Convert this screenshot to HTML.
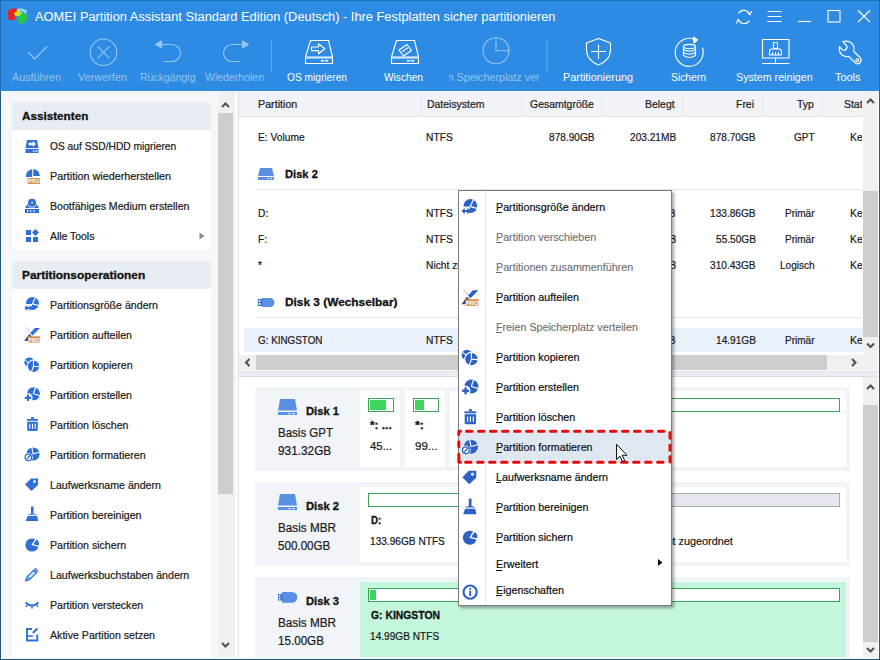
<!DOCTYPE html>
<html><head><meta charset="utf-8"><style>
html,body{margin:0;padding:0;width:880px;height:660px;overflow:hidden;background:#fff}
body{position:relative;font-family:"Liberation Sans", sans-serif}
</style></head><body>
<div style="position:absolute;left:0px;top:0px;width:880px;height:91px;background:#2d8be3;"></div>
<div style="position:absolute;left:0px;top:0px;width:880px;height:1px;background:#1e6fc0;"></div>
<svg style="position:absolute;left:0;top:0" width="32" height="30" viewBox="0 0 32 30">
<path d="M15 10.5 Q21 6 27.5 11 L26 14 Q21 9.5 17 12.5 Z" fill="#86d8f6"/>
<path d="M8 11 Q11 7.5 16.5 8.3 L17.5 13 L14.5 16 L15.5 20 H8.3 Z" fill="#e8231f"/>
<path d="M14 12.8 L18.5 10.5 L22.5 13 L19.5 16.5 L15 15.8 Z" fill="#c4e32c"/>
<path d="M17.2 17 L22.5 13.5 L27.5 15 L27.2 20 L21.5 24 L17.5 22.5 Z" fill="#27c744"/>
</svg>
<svg style="position:absolute;left:730px;top:4px" width="148" height="26" viewBox="730 4 148 26" fill="none" stroke="#fff" stroke-width="1.1">
<path d="M738.5 13.5 A6 6 0 0 1 749.5 14.5" /><path d="M749.5 20.5 A6 6 0 0 1 738.5 19.5"/>
<path d="M747 11.5 L750 14.8 L751.5 11" /><path d="M741 23 L738 19.5 L736.5 23.5"/>
<path d="M767.5 11.5 H781.5 M767.5 16.5 H781.5 M767.5 21.5 H781.5"/>
<path d="M798 21.5 H811"/>
<rect x="828" y="10.5" width="12" height="11.5"/>
<path d="M858 10.5 L870 22 M870 10.5 L858 22"/>
</svg>
<svg style="position:absolute;left:0;top:30px" width="880" height="42" viewBox="0 30 880 42" fill="none" stroke-width="1.15" stroke-linecap="round" stroke-linejoin="round">
<g stroke="#96c4f0">
<path d="M28.5 52.5 L34.5 59 L47 46.5"/>
<circle cx="103.5" cy="52.3" r="13.3"/>
<path d="M98 46.8 L109 57.8 M109 46.8 L98 57.8"/>
<path d="M160 44.5 H172 A8.5 8.5 0 0 1 172 61.5 H164"/><path d="M161.5 41 L155.5 44.5 L161.5 48 Z" fill="#96c4f0"/>
<path d="M244 44.5 H232 A8.5 8.5 0 0 0 232 61.5 H240"/><path d="M242.5 41 L248.5 44.5 L242.5 48 Z" fill="#96c4f0"/>
<circle cx="496" cy="50.7" r="13"/>
<path d="M496 38 V50.7 H509"/>
</g>
<path d="M271.5 40 V79" stroke="#6aa9ea" stroke-width="1"/>
<path d="M547 40 V80" stroke="#6aa9ea" stroke-width="1"/>
<g stroke="#fff">
<path d="M305.5 57 L310.5 40.5 H328.5 L332.5 57 Z"/><rect x="305.5" y="58" width="27" height="5.5"/>
<path d="M321.5 60.8 H323.5 M325.5 60.8 H327.5" stroke-width="1.5"/>
<path d="M311.5 47 H318.5 V43.8 L324.8 48.8 L318.5 53.8 V50.6 H311.5 Z"/>
<path d="M391.5 57 L396.5 40.5 H414.5 L418.5 57 Z"/><rect x="391.5" y="58" width="27" height="5.5"/>
<path d="M407.5 60.8 H409.5 M411.5 60.8 H413.5" stroke-width="1.5"/>
<path d="M399 50 L407 44.5 L411.5 50.5 L403.5 56 Z"/><path d="M402.5 51.5 L407.5 48"/>
<path d="M598.5 38.5 L610.5 43 V50 Q610.5 60 598.5 65 Q586.5 60 586.5 50 V43 Z"/>
<path d="M598.5 45 V58.5 M591.5 51.5 H605.5"/>
<path d="M702.5 48 A14 14 0 1 1 694 39.2"/><path d="M693.5 37 L697.5 39.8 L694 43.2 Z" fill="#fff"/>
<ellipse cx="689.5" cy="46.5" rx="6" ry="2.2"/><path d="M683.5 46.5 V55.5 Q689.5 59.5 695.5 55.5 V46.5 M683.5 49.5 Q689.5 53 695.5 49.5 M683.5 52.5 Q689.5 56 695.5 52.5"/>
<rect x="762.5" y="39.5" width="26.5" height="18.5"/><path d="M775.5 58 V63.5 M762.5 63.5 H789"/>
<path d="M773.5 42.5 H777.5 V48.5 H773.5 Z M769.5 55 V51.5 Q769.5 49 772 49 H779 Q781.5 49 781.5 51.5 V55 Z M772.5 55 V52.5 M775.5 55 V52.5 M778.5 55 V52.5"/>
<path d="M842.9 41.8 L847 46 Q847.5 48.8 845 50.2 Q842 50.8 839.5 46.5 Q838.3 52 842.5 55.3 Q845.8 57.3 849 56.6 L855.5 63 Q858.3 65 860.5 62.2 Q862 59.5 860 57.5 L853.8 51.5 Q855 45.2 850.3 42.3 Q846.5 40.3 842.9 41.8 Z"/><circle cx="857.3" cy="60.2" r="1.4"/>
</g>
</svg>
<span style="position:absolute;left:35.30px;top:11.14px;font-size:12px;line-height:12px;font-weight:400;color:#fff;transform:scaleX(1.0690);transform-origin:0 0;white-space:pre;">AOMEI Partition Assistant Standard Edition (Deutsch) - Ihre Festplatten sicher partitionieren</span>
<div style="position:absolute;left:1px;top:91px;width:217px;height:568px;background:#f5f7fa;"></div>
<div style="position:absolute;left:12px;top:102px;width:199px;height:28px;background:#e8edf4;"></div>
<div style="position:absolute;left:12px;top:130px;width:199px;height:120px;background:#ffffff;"></div>
<div style="position:absolute;left:12px;top:261px;width:199px;height:28px;background:#e8edf4;"></div>
<div style="position:absolute;left:12px;top:289px;width:199px;height:369px;background:#ffffff;"></div>
<div style="position:absolute;left:218px;top:91px;width:17px;height:568px;background:#f0f0f0;"></div>
<div style="position:absolute;left:218px;top:113px;width:15px;height:381px;background:#cdcdcd;"></div>
<div style="position:absolute;left:235px;top:91px;width:3px;height:568px;background:#fbfbfb;"></div>
<div style="position:absolute;left:238px;top:91px;width:1px;height:568px;background:#dce2ea;"></div>
<span style="position:absolute;left:12.00px;top:71.72px;font-size:11.2px;line-height:11.2px;font-weight:400;color:#96c4f0;transform:scaleX(0.9608);transform-origin:0 0;white-space:pre;">Ausführen</span>
<span style="position:absolute;left:78.00px;top:71.72px;font-size:11.2px;line-height:11.2px;font-weight:400;color:#96c4f0;transform:scaleX(0.9727);transform-origin:0 0;white-space:pre;">Verwerfen</span>
<span style="position:absolute;left:139.95px;top:71.72px;font-size:11.2px;line-height:11.2px;font-weight:400;color:#96c4f0;transform:scaleX(0.9392);transform-origin:0 0;white-space:pre;">Rückgängig</span>
<span style="position:absolute;left:205.00px;top:71.72px;font-size:11.2px;line-height:11.2px;font-weight:400;color:#96c4f0;transform:scaleX(0.9393);transform-origin:0 0;white-space:pre;">Wiederholen</span>
<span style="position:absolute;left:287.00px;top:71.72px;font-size:11.2px;line-height:11.2px;font-weight:400;color:#fff;transform:scaleX(0.9104);transform-origin:0 0;white-space:pre;">OS migrieren</span>
<span style="position:absolute;left:384.00px;top:71.72px;font-size:11.2px;line-height:11.2px;font-weight:400;color:#fff;transform:scaleX(0.9090);transform-origin:0 0;white-space:pre;">Wischen</span>
<div style="position:absolute;left:449px;top:66.72px;width:90px;height:21.2px;overflow:hidden"><span style="position:absolute;left:-26.20px;top:5px;font-size:11.2px;line-height:11.2px;font-weight:400;color:#96c4f0;transform:scaleX(0.9622);transform-origin:0 0;white-space:pre;">Freien Speicherplatz verteilen</span></div>
<span style="position:absolute;left:562.50px;top:71.72px;font-size:11.2px;line-height:11.2px;font-weight:400;color:#fff;transform:scaleX(0.9703);transform-origin:0 0;white-space:pre;">Partitionierung</span>
<span style="position:absolute;left:670.50px;top:71.72px;font-size:11.2px;line-height:11.2px;font-weight:400;color:#fff;transform:scaleX(0.9226);transform-origin:0 0;white-space:pre;">Sichern</span>
<span style="position:absolute;left:736.00px;top:71.72px;font-size:11.2px;line-height:11.2px;font-weight:400;color:#fff;transform:scaleX(0.9549);transform-origin:0 0;white-space:pre;">System reinigen</span>
<span style="position:absolute;left:835.00px;top:71.72px;font-size:11.2px;line-height:11.2px;font-weight:400;color:#fff;transform:scaleX(0.9722);transform-origin:0 0;white-space:pre;">Tools</span>
<div style="position:absolute;left:239px;top:91px;width:624px;height:25px;background:#f0f3f8;"></div>
<div style="position:absolute;left:239px;top:91px;width:624px;height:1px;background:#fafcfe;"></div>
<div style="position:absolute;left:239px;top:116px;width:624px;height:1px;background:#dfe4ea;"></div>
<div style="position:absolute;left:421px;top:95px;width:1px;height:18px;background:#e2e6ec;"></div>
<div style="position:absolute;left:521px;top:95px;width:1px;height:18px;background:#e2e6ec;"></div>
<div style="position:absolute;left:601px;top:95px;width:1px;height:18px;background:#e2e6ec;"></div>
<div style="position:absolute;left:682px;top:95px;width:1px;height:18px;background:#e2e6ec;"></div>
<div style="position:absolute;left:762px;top:95px;width:1px;height:18px;background:#e2e6ec;"></div>
<div style="position:absolute;left:822px;top:95px;width:1px;height:18px;background:#e2e6ec;"></div>
<div style="position:absolute;left:256px;top:189px;width:606px;height:1px;background:#e3e7ec;"></div>
<div style="position:absolute;left:256px;top:317px;width:606px;height:1px;background:#e3e7ec;"></div>
<div style="position:absolute;left:244px;top:328px;width:619px;height:24px;background:#ebf1fb;"></div>
<div style="position:absolute;left:863px;top:91px;width:15px;height:262px;background:#f0f0f0;"></div>
<div style="position:absolute;left:863px;top:191px;width:15px;height:146px;background:#cdcdcd;"></div>
<div style="position:absolute;left:863px;top:352px;width:15px;height:4px;background:#f0f0f0;"></div>
<div style="position:absolute;left:239px;top:355px;width:639px;height:15px;background:#f0f0f0;"></div>
<div style="position:absolute;left:256px;top:355px;width:571px;height:15px;background:#cdcdcd;"></div>
<div style="position:absolute;left:239px;top:371px;width:639px;height:1px;background:#dfe3e8;"></div>
<div style="position:absolute;left:239px;top:372px;width:639px;height:4px;background:#e9eef6;"></div>
<div style="position:absolute;left:239px;top:376px;width:639px;height:1px;background:#d9dee4;"></div>
<span style="position:absolute;left:22.30px;top:111.17px;font-size:11.5px;line-height:11.5px;font-weight:700;color:#111;transform:scaleX(1.0171);transform-origin:0 0;white-space:pre;-webkit-text-stroke:0.3px #111;">Assistenten</span>
<span style="position:absolute;left:22.30px;top:270.07px;font-size:11.5px;line-height:11.5px;font-weight:700;color:#111;transform:scaleX(1.0365);transform-origin:0 0;white-space:pre;-webkit-text-stroke:0.3px #111;">Partitionsoperationen</span>
<span style="position:absolute;left:49.80px;top:140.69px;font-size:11px;line-height:11px;font-weight:400;color:#1a1a1a;transform:scaleX(0.9299);transform-origin:0 0;white-space:pre;-webkit-text-stroke:0.22px #1a1a1a;">OS auf SSD/HDD migrieren</span>
<span style="position:absolute;left:49.80px;top:170.69px;font-size:11px;line-height:11px;font-weight:400;color:#1a1a1a;transform:scaleX(0.9804);transform-origin:0 0;white-space:pre;-webkit-text-stroke:0.22px #1a1a1a;">Partition wiederherstellen</span>
<span style="position:absolute;left:49.80px;top:200.69px;font-size:11px;line-height:11px;font-weight:400;color:#1a1a1a;transform:scaleX(0.9626);transform-origin:0 0;white-space:pre;-webkit-text-stroke:0.22px #1a1a1a;">Bootfähiges Medium erstellen</span>
<span style="position:absolute;left:49.80px;top:230.69px;font-size:11px;line-height:11px;font-weight:400;color:#1a1a1a;transform:scaleX(0.9469);transform-origin:0 0;white-space:pre;-webkit-text-stroke:0.22px #1a1a1a;">Alle Tools</span>
<span style="position:absolute;left:49.80px;top:299.69px;font-size:11px;line-height:11px;font-weight:400;color:#1a1a1a;transform:scaleX(0.9650);transform-origin:0 0;white-space:pre;-webkit-text-stroke:0.22px #1a1a1a;">Partitionsgröße ändern</span>
<span style="position:absolute;left:49.80px;top:329.69px;font-size:11px;line-height:11px;font-weight:400;color:#1a1a1a;transform:scaleX(0.9650);transform-origin:0 0;white-space:pre;-webkit-text-stroke:0.22px #1a1a1a;">Partition aufteilen</span>
<span style="position:absolute;left:49.80px;top:359.69px;font-size:11px;line-height:11px;font-weight:400;color:#1a1a1a;transform:scaleX(0.9650);transform-origin:0 0;white-space:pre;-webkit-text-stroke:0.22px #1a1a1a;">Partition kopieren</span>
<span style="position:absolute;left:49.80px;top:389.69px;font-size:11px;line-height:11px;font-weight:400;color:#1a1a1a;transform:scaleX(0.9650);transform-origin:0 0;white-space:pre;-webkit-text-stroke:0.22px #1a1a1a;">Partition erstellen</span>
<span style="position:absolute;left:49.80px;top:419.69px;font-size:11px;line-height:11px;font-weight:400;color:#1a1a1a;transform:scaleX(0.9650);transform-origin:0 0;white-space:pre;-webkit-text-stroke:0.22px #1a1a1a;">Partition löschen</span>
<span style="position:absolute;left:49.80px;top:449.69px;font-size:11px;line-height:11px;font-weight:400;color:#1a1a1a;transform:scaleX(0.9650);transform-origin:0 0;white-space:pre;-webkit-text-stroke:0.22px #1a1a1a;">Partition formatieren</span>
<span style="position:absolute;left:49.80px;top:479.69px;font-size:11px;line-height:11px;font-weight:400;color:#1a1a1a;transform:scaleX(0.9650);transform-origin:0 0;white-space:pre;-webkit-text-stroke:0.22px #1a1a1a;">Laufwerksname ändern</span>
<span style="position:absolute;left:49.80px;top:509.69px;font-size:11px;line-height:11px;font-weight:400;color:#1a1a1a;transform:scaleX(0.9650);transform-origin:0 0;white-space:pre;-webkit-text-stroke:0.22px #1a1a1a;">Partition bereinigen</span>
<span style="position:absolute;left:49.80px;top:539.69px;font-size:11px;line-height:11px;font-weight:400;color:#1a1a1a;transform:scaleX(0.9650);transform-origin:0 0;white-space:pre;-webkit-text-stroke:0.22px #1a1a1a;">Partition sichern</span>
<span style="position:absolute;left:49.80px;top:569.69px;font-size:11px;line-height:11px;font-weight:400;color:#1a1a1a;transform:scaleX(0.9650);transform-origin:0 0;white-space:pre;-webkit-text-stroke:0.22px #1a1a1a;">Laufwerksbuchstaben ändern</span>
<span style="position:absolute;left:49.80px;top:599.69px;font-size:11px;line-height:11px;font-weight:400;color:#1a1a1a;transform:scaleX(0.9650);transform-origin:0 0;white-space:pre;-webkit-text-stroke:0.22px #1a1a1a;">Partition verstecken</span>
<span style="position:absolute;left:49.80px;top:629.69px;font-size:11px;line-height:11px;font-weight:400;color:#1a1a1a;transform:scaleX(0.9650);transform-origin:0 0;white-space:pre;-webkit-text-stroke:0.22px #1a1a1a;">Aktive Partition setzen</span>
<svg style="position:absolute;left:256px;top:166px" width="20" height="16" viewBox="0 0 20 16"><path d="M4 2 H16 L18 10 H2 Z" fill="#5990e4"/><rect x="2" y="11" width="16" height="3" fill="#5990e4"/><rect x="11.5" y="12" width="1.6" height="1" fill="#fff"/><rect x="14.5" y="12" width="1.6" height="1" fill="#fff"/></svg>
<svg style="position:absolute;left:256px;top:296px" width="20" height="14" viewBox="0 0 20 14"><path d="M6 2 H14 A4.5 4.5 0 0 1 14 11 H6 Z" fill="#5990e4"/><rect x="1.8" y="3" width="4.4" height="7" fill="#3f6fc0"/><rect x="2.8" y="4" width="1.5" height="2" fill="#fff"/><rect x="2.8" y="7" width="1.5" height="2" fill="#fff"/></svg>
<div style="position:absolute;left:863px;top:377px;width:15px;height:282px;background:#f0f0f0;"></div>
<div style="position:absolute;left:863px;top:405px;width:15px;height:237px;background:#cdcdcd;"></div>
<div style="position:absolute;left:255px;top:387px;width:595px;height:84px;background:#f1f4f9;"></div>
<svg style="position:absolute;left:276px;top:397px" width="24" height="20" viewBox="0 0 24 20"><path d="M4 2 H19 L21 13.5 H2 Z" fill="#5990e4"/><rect x="2" y="15" width="19" height="3" fill="#5990e4"/><rect x="12.5" y="16" width="2" height="1.2" fill="#fff"/><rect x="16.5" y="16" width="2" height="1.2" fill="#fff"/></svg>
<span style="position:absolute;left:257.80px;top:99.29px;font-size:11px;line-height:11px;font-weight:400;color:#222;transform:scaleX(0.9738);transform-origin:0 0;white-space:pre;-webkit-text-stroke:0.22px #222;">Partition</span>
<span style="position:absolute;left:426.70px;top:99.29px;font-size:11px;line-height:11px;font-weight:400;color:#222;transform:scaleX(0.9500);transform-origin:0 0;white-space:pre;-webkit-text-stroke:0.22px #222;">Dateisystem</span>
<span style="position:absolute;left:530.11px;top:99.29px;font-size:11px;line-height:11px;font-weight:400;color:#222;transform:scaleX(0.9500);transform-origin:0 0;white-space:pre;-webkit-text-stroke:0.22px #222;">Gesamtgröße</span>
<span style="position:absolute;left:645.16px;top:99.29px;font-size:11px;line-height:11px;font-weight:400;color:#222;transform:scaleX(0.9500);transform-origin:0 0;white-space:pre;-webkit-text-stroke:0.22px #222;">Belegt</span>
<span style="position:absolute;left:736.29px;top:99.29px;font-size:11px;line-height:11px;font-weight:400;color:#222;transform:scaleX(0.9500);transform-origin:0 0;white-space:pre;-webkit-text-stroke:0.22px #222;">Frei</span>
<span style="position:absolute;left:796.95px;top:99.29px;font-size:11px;line-height:11px;font-weight:400;color:#222;transform:scaleX(0.9500);transform-origin:0 0;white-space:pre;-webkit-text-stroke:0.22px #222;">Typ</span>
<div style="position:absolute;left:830px;top:94.29px;width:32px;height:21px;overflow:hidden"><span style="position:absolute;left:13.50px;top:5px;font-size:11px;line-height:11px;font-weight:400;color:#222;transform:scaleX(0.9500);transform-origin:0 0;white-space:pre;-webkit-text-stroke:0.22px #222;">Status</span></div>
<span style="position:absolute;left:258.30px;top:131.69px;font-size:11px;line-height:11px;font-weight:400;color:#1a1a1a;transform:scaleX(0.9300);transform-origin:0 0;white-space:pre;-webkit-text-stroke:0.22px #1a1a1a;">E: Volume</span>
<span style="position:absolute;left:426.30px;top:131.69px;font-size:11px;line-height:11px;font-weight:400;color:#1a1a1a;transform:scaleX(0.9300);transform-origin:0 0;white-space:pre;-webkit-text-stroke:0.22px #1a1a1a;">NTFS</span>
<span style="position:absolute;left:549.42px;top:131.69px;font-size:11px;line-height:11px;font-weight:400;color:#1a1a1a;transform:scaleX(0.9200);transform-origin:0 0;white-space:pre;-webkit-text-stroke:0.22px #1a1a1a;">878.90GB</span>
<span style="position:absolute;left:629.66px;top:131.69px;font-size:11px;line-height:11px;font-weight:400;color:#1a1a1a;transform:scaleX(0.9200);transform-origin:0 0;white-space:pre;-webkit-text-stroke:0.22px #1a1a1a;">203.21MB</span>
<span style="position:absolute;left:709.92px;top:131.69px;font-size:11px;line-height:11px;font-weight:400;color:#1a1a1a;transform:scaleX(0.9200);transform-origin:0 0;white-space:pre;-webkit-text-stroke:0.22px #1a1a1a;">878.70GB</span>
<span style="position:absolute;left:793.91px;top:131.69px;font-size:11px;line-height:11px;font-weight:400;color:#1a1a1a;transform:scaleX(0.9100);transform-origin:0 0;white-space:pre;-webkit-text-stroke:0.22px #1a1a1a;">GPT</span>
<div style="position:absolute;left:830px;top:126.69px;width:32px;height:21px;overflow:hidden"><span style="position:absolute;left:19.50px;top:5px;font-size:11px;line-height:11px;font-weight:400;color:#1a1a1a;transform:scaleX(0.9500);transform-origin:0 0;white-space:pre;-webkit-text-stroke:0.22px #1a1a1a;">Keine</span></div>
<span style="position:absolute;left:258.30px;top:207.69px;font-size:11px;line-height:11px;font-weight:400;color:#1a1a1a;transform:scaleX(0.9300);transform-origin:0 0;white-space:pre;-webkit-text-stroke:0.22px #1a1a1a;">D:</span>
<span style="position:absolute;left:426.30px;top:207.69px;font-size:11px;line-height:11px;font-weight:400;color:#1a1a1a;transform:scaleX(0.9300);transform-origin:0 0;white-space:pre;-webkit-text-stroke:0.22px #1a1a1a;">NTFS</span>
<span style="position:absolute;left:549.42px;top:207.69px;font-size:11px;line-height:11px;font-weight:400;color:#1a1a1a;transform:scaleX(0.9200);transform-origin:0 0;white-space:pre;-webkit-text-stroke:0.22px #1a1a1a;">133.96GB</span>
<span style="position:absolute;left:635.29px;top:207.69px;font-size:11px;line-height:11px;font-weight:400;color:#1a1a1a;transform:scaleX(0.9200);transform-origin:0 0;white-space:pre;-webkit-text-stroke:0.22px #1a1a1a;">99.83MB</span>
<span style="position:absolute;left:709.92px;top:207.69px;font-size:11px;line-height:11px;font-weight:400;color:#1a1a1a;transform:scaleX(0.9200);transform-origin:0 0;white-space:pre;-webkit-text-stroke:0.22px #1a1a1a;">133.86GB</span>
<span style="position:absolute;left:785.02px;top:207.69px;font-size:11px;line-height:11px;font-weight:400;color:#1a1a1a;transform:scaleX(0.9100);transform-origin:0 0;white-space:pre;-webkit-text-stroke:0.22px #1a1a1a;">Primär</span>
<div style="position:absolute;left:830px;top:202.69px;width:32px;height:21px;overflow:hidden"><span style="position:absolute;left:19.50px;top:5px;font-size:11px;line-height:11px;font-weight:400;color:#1a1a1a;transform:scaleX(0.9500);transform-origin:0 0;white-space:pre;-webkit-text-stroke:0.22px #1a1a1a;">Keine</span></div>
<span style="position:absolute;left:258.30px;top:233.69px;font-size:11px;line-height:11px;font-weight:400;color:#1a1a1a;transform:scaleX(0.9300);transform-origin:0 0;white-space:pre;-webkit-text-stroke:0.22px #1a1a1a;">F:</span>
<span style="position:absolute;left:426.30px;top:233.69px;font-size:11px;line-height:11px;font-weight:400;color:#1a1a1a;transform:scaleX(0.9300);transform-origin:0 0;white-space:pre;-webkit-text-stroke:0.22px #1a1a1a;">NTFS</span>
<span style="position:absolute;left:555.05px;top:233.69px;font-size:11px;line-height:11px;font-weight:400;color:#1a1a1a;transform:scaleX(0.9200);transform-origin:0 0;white-space:pre;-webkit-text-stroke:0.22px #1a1a1a;">55.66GB</span>
<span style="position:absolute;left:629.66px;top:233.69px;font-size:11px;line-height:11px;font-weight:400;color:#1a1a1a;transform:scaleX(0.9200);transform-origin:0 0;white-space:pre;-webkit-text-stroke:0.22px #1a1a1a;">157.33MB</span>
<span style="position:absolute;left:715.55px;top:233.69px;font-size:11px;line-height:11px;font-weight:400;color:#1a1a1a;transform:scaleX(0.9200);transform-origin:0 0;white-space:pre;-webkit-text-stroke:0.22px #1a1a1a;">55.50GB</span>
<span style="position:absolute;left:785.02px;top:233.69px;font-size:11px;line-height:11px;font-weight:400;color:#1a1a1a;transform:scaleX(0.9100);transform-origin:0 0;white-space:pre;-webkit-text-stroke:0.22px #1a1a1a;">Primär</span>
<div style="position:absolute;left:830px;top:228.69px;width:32px;height:21px;overflow:hidden"><span style="position:absolute;left:19.50px;top:5px;font-size:11px;line-height:11px;font-weight:400;color:#1a1a1a;transform:scaleX(0.9500);transform-origin:0 0;white-space:pre;-webkit-text-stroke:0.22px #1a1a1a;">Keine</span></div>
<span style="position:absolute;left:258.30px;top:259.69px;font-size:11px;line-height:11px;font-weight:400;color:#1a1a1a;transform:scaleX(0.9300);transform-origin:0 0;white-space:pre;-webkit-text-stroke:0.22px #1a1a1a;">*</span>
<span style="position:absolute;left:426.30px;top:259.69px;font-size:11px;line-height:11px;font-weight:400;color:#1a1a1a;transform:scaleX(0.9300);transform-origin:0 0;white-space:pre;-webkit-text-stroke:0.22px #1a1a1a;">Nicht zugeordnet</span>
<span style="position:absolute;left:549.42px;top:259.69px;font-size:11px;line-height:11px;font-weight:400;color:#1a1a1a;transform:scaleX(0.9200);transform-origin:0 0;white-space:pre;-webkit-text-stroke:0.22px #1a1a1a;">310.43GB</span>
<span style="position:absolute;left:642.59px;top:259.69px;font-size:11px;line-height:11px;font-weight:400;color:#1a1a1a;transform:scaleX(0.9200);transform-origin:0 0;white-space:pre;-webkit-text-stroke:0.22px #1a1a1a;">0.00KB</span>
<span style="position:absolute;left:709.92px;top:259.69px;font-size:11px;line-height:11px;font-weight:400;color:#1a1a1a;transform:scaleX(0.9200);transform-origin:0 0;white-space:pre;-webkit-text-stroke:0.22px #1a1a1a;">310.43GB</span>
<span style="position:absolute;left:779.99px;top:259.69px;font-size:11px;line-height:11px;font-weight:400;color:#1a1a1a;transform:scaleX(0.9100);transform-origin:0 0;white-space:pre;-webkit-text-stroke:0.22px #1a1a1a;">Logisch</span>
<div style="position:absolute;left:830px;top:254.69px;width:32px;height:21px;overflow:hidden"><span style="position:absolute;left:19.50px;top:5px;font-size:11px;line-height:11px;font-weight:400;color:#1a1a1a;transform:scaleX(0.9500);transform-origin:0 0;white-space:pre;-webkit-text-stroke:0.22px #1a1a1a;">Keine</span></div>
<span style="position:absolute;left:258.30px;top:335.19px;font-size:11px;line-height:11px;font-weight:400;color:#1a1a1a;transform:scaleX(0.8968);transform-origin:0 0;white-space:pre;-webkit-text-stroke:0.22px #1a1a1a;">G: KINGSTON</span>
<span style="position:absolute;left:426.30px;top:335.19px;font-size:11px;line-height:11px;font-weight:400;color:#1a1a1a;transform:scaleX(0.9300);transform-origin:0 0;white-space:pre;-webkit-text-stroke:0.22px #1a1a1a;">NTFS</span>
<span style="position:absolute;left:555.05px;top:335.19px;font-size:11px;line-height:11px;font-weight:400;color:#1a1a1a;transform:scaleX(0.9200);transform-origin:0 0;white-space:pre;-webkit-text-stroke:0.22px #1a1a1a;">14.99GB</span>
<span style="position:absolute;left:635.29px;top:335.19px;font-size:11px;line-height:11px;font-weight:400;color:#1a1a1a;transform:scaleX(0.9200);transform-origin:0 0;white-space:pre;-webkit-text-stroke:0.22px #1a1a1a;">80.33MB</span>
<span style="position:absolute;left:715.55px;top:335.19px;font-size:11px;line-height:11px;font-weight:400;color:#1a1a1a;transform:scaleX(0.9200);transform-origin:0 0;white-space:pre;-webkit-text-stroke:0.22px #1a1a1a;">14.91GB</span>
<span style="position:absolute;left:785.02px;top:335.19px;font-size:11px;line-height:11px;font-weight:400;color:#1a1a1a;transform:scaleX(0.9100);transform-origin:0 0;white-space:pre;-webkit-text-stroke:0.22px #1a1a1a;">Primär</span>
<div style="position:absolute;left:830px;top:330.19px;width:32px;height:21px;overflow:hidden"><span style="position:absolute;left:19.50px;top:5px;font-size:11px;line-height:11px;font-weight:400;color:#1a1a1a;transform:scaleX(0.9500);transform-origin:0 0;white-space:pre;-webkit-text-stroke:0.22px #1a1a1a;">Keine</span></div>
<span style="position:absolute;left:284.50px;top:169.07px;font-size:11.5px;line-height:11.5px;font-weight:700;color:#111;transform:scaleX(0.9700);transform-origin:0 0;white-space:pre;-webkit-text-stroke:0.3px #111;">Disk 2</span>
<span style="position:absolute;left:284.50px;top:297.27px;font-size:11.5px;line-height:11.5px;font-weight:700;color:#111;transform:scaleX(1.0312);transform-origin:0 0;white-space:pre;-webkit-text-stroke:0.3px #111;">Disk 3 (Wechselbar)</span>
<div style="position:absolute;left:255px;top:482px;width:595px;height:84px;background:#f1f4f9;"></div>
<svg style="position:absolute;left:276px;top:492px" width="24" height="20" viewBox="0 0 24 20"><path d="M4 2 H19 L21 13.5 H2 Z" fill="#5990e4"/><rect x="2" y="15" width="19" height="3" fill="#5990e4"/><rect x="12.5" y="16" width="2" height="1.2" fill="#fff"/><rect x="16.5" y="16" width="2" height="1.2" fill="#fff"/></svg>
<span style="position:absolute;left:305.50px;top:405.69px;font-size:11px;line-height:11px;font-weight:700;color:#111;transform:scaleX(1.0178);transform-origin:0 0;white-space:pre;-webkit-text-stroke:0.3px #111;">Disk 1</span>
<span style="position:absolute;left:278.30px;top:427.22px;font-size:12.5px;line-height:12.5px;font-weight:400;color:#1a1a1a;transform:scaleX(0.9205);transform-origin:0 0;white-space:pre;-webkit-text-stroke:0.22px #1a1a1a;">Basis GPT</span>
<span style="position:absolute;left:278.30px;top:445.22px;font-size:12.5px;line-height:12.5px;font-weight:400;color:#1a1a1a;transform:scaleX(0.9450);transform-origin:0 0;white-space:pre;-webkit-text-stroke:0.22px #1a1a1a;">931.32GB</span>
<div style="position:absolute;left:255px;top:577px;width:595px;height:84px;background:#f1f4f9;"></div>
<svg style="position:absolute;left:276px;top:587px" width="24" height="20" viewBox="0 0 24 20"><path d="M6 5 H16 A5.3 5.3 0 0 1 16 15.7 H6 Z" fill="#5990e4"/><rect x="2" y="7" width="4.3" height="6.5" fill="#3f6fc0"/><rect x="2.9" y="8" width="1.5" height="1.8" fill="#fff"/><rect x="2.9" y="10.8" width="1.5" height="1.8" fill="#fff"/></svg>
<span style="position:absolute;left:305.50px;top:500.69px;font-size:11px;line-height:11px;font-weight:700;color:#111;transform:scaleX(1.0178);transform-origin:0 0;white-space:pre;-webkit-text-stroke:0.3px #111;">Disk 2</span>
<span style="position:absolute;left:278.30px;top:522.22px;font-size:12.5px;line-height:12.5px;font-weight:400;color:#1a1a1a;transform:scaleX(0.9381);transform-origin:0 0;white-space:pre;-webkit-text-stroke:0.22px #1a1a1a;">Basis MBR</span>
<span style="position:absolute;left:278.30px;top:540.22px;font-size:12.5px;line-height:12.5px;font-weight:400;color:#1a1a1a;transform:scaleX(0.9300);transform-origin:0 0;white-space:pre;-webkit-text-stroke:0.22px #1a1a1a;">500.00GB</span>
<div style="position:absolute;left:360px;top:391px;width:40px;height:76px;background:#fff;"></div>
<div style="position:absolute;left:405px;top:391px;width:40px;height:76px;background:#fff;"></div>
<div style="position:absolute;left:450px;top:391px;width:396px;height:76px;background:#fff;"></div>
<div style="position:absolute;left:368px;top:398px;width:26px;height:14px;background:#fff;box-sizing:border-box;border:1px solid #3aa357"></div>
<div style="position:absolute;left:370px;top:400px;width:16px;height:10px;background:#3dd65c;"></div>
<div style="position:absolute;left:413px;top:398px;width:26px;height:14px;background:#fff;box-sizing:border-box;border:1px solid #3aa357"></div>
<div style="position:absolute;left:415px;top:400px;width:9px;height:10px;background:#3dd65c;"></div>
<div style="position:absolute;left:458px;top:398px;width:382px;height:14px;background:#fff;box-sizing:border-box;border:1px solid #3aa357"></div>
<span style="position:absolute;left:305.50px;top:595.69px;font-size:11px;line-height:11px;font-weight:700;color:#111;transform:scaleX(1.0178);transform-origin:0 0;white-space:pre;-webkit-text-stroke:0.3px #111;">Disk 3</span>
<span style="position:absolute;left:278.30px;top:617.22px;font-size:12.5px;line-height:12.5px;font-weight:400;color:#1a1a1a;transform:scaleX(0.9381);transform-origin:0 0;white-space:pre;-webkit-text-stroke:0.22px #1a1a1a;">Basis MBR</span>
<span style="position:absolute;left:278.30px;top:635.22px;font-size:12.5px;line-height:12.5px;font-weight:400;color:#1a1a1a;transform:scaleX(0.9300);transform-origin:0 0;white-space:pre;-webkit-text-stroke:0.22px #1a1a1a;">15.00GB</span>
<div style="position:absolute;left:360px;top:487px;width:486px;height:75px;background:#fff;"></div>
<div style="position:absolute;left:368px;top:493px;width:472px;height:14px;background:#fff;box-sizing:border-box;border:1px solid #3aa357"></div>
<div style="position:absolute;left:640px;top:493px;width:200px;height:14px;background:#e4e7ed;box-sizing:border-box;border:1px solid #a9adb3"></div>
<span style="position:absolute;left:370.30px;top:419.77px;font-size:11.5px;line-height:11.5px;font-weight:700;color:#111;transform:scaleX(1.0287);transform-origin:0 0;white-space:pre;-webkit-text-stroke:0.3px #111;">*: ...</span>
<span style="position:absolute;left:370.30px;top:440.69px;font-size:11px;line-height:11px;font-weight:400;color:#1a1a1a;transform:scaleX(1.0371);transform-origin:0 0;white-space:pre;-webkit-text-stroke:0.22px #1a1a1a;">45...</span>
<span style="position:absolute;left:415.30px;top:419.77px;font-size:11.5px;line-height:11.5px;font-weight:700;color:#111;transform:scaleX(1.0827);transform-origin:0 0;white-space:pre;-webkit-text-stroke:0.3px #111;">*:</span>
<span style="position:absolute;left:414.80px;top:440.69px;font-size:11px;line-height:11px;font-weight:400;color:#1a1a1a;transform:scaleX(1.0511);transform-origin:0 0;white-space:pre;-webkit-text-stroke:0.22px #1a1a1a;">99...</span>
<div style="position:absolute;left:360px;top:582px;width:486px;height:76px;background:#c3f6dc;"></div>
<div style="position:absolute;left:368px;top:588px;width:472px;height:14px;background:#fff;box-sizing:border-box;border:1px solid #3aa357"></div>
<div style="position:absolute;left:370px;top:590px;width:6px;height:10px;background:#3dd65c;"></div>
<span style="position:absolute;left:370.50px;top:515.19px;font-size:11px;line-height:11px;font-weight:700;color:#111;transform:scaleX(0.8872);transform-origin:0 0;white-space:pre;-webkit-text-stroke:0.3px #111;">D:</span>
<span style="position:absolute;left:370.00px;top:535.69px;font-size:11px;line-height:11px;font-weight:400;color:#1a1a1a;transform:scaleX(0.9200);transform-origin:0 0;white-space:pre;-webkit-text-stroke:0.22px #1a1a1a;">133.96GB NTFS</span>
<span style="position:absolute;left:599.07px;top:535.69px;font-size:11px;line-height:11px;font-weight:400;color:#1a1a1a;transform:scaleX(0.9850);transform-origin:0 0;white-space:pre;-webkit-text-stroke:0.22px #1a1a1a;">310.43GB Nicht zugeordnet</span>
<div style="position:absolute;left:0px;top:91px;width:1px;height:569px;background:#245a80;"></div>
<div style="position:absolute;left:879px;top:91px;width:1px;height:569px;background:#245a80;"></div>
<div style="position:absolute;left:0px;top:0px;width:1px;height:91px;background:#1f6cb8;"></div>
<div style="position:absolute;left:879px;top:0px;width:1px;height:91px;background:#1f6cb8;"></div>
<div style="position:absolute;left:0px;top:659px;width:880px;height:1px;background:#1f5478;"></div>
<div style="position:absolute;left:1px;top:657px;width:878px;height:2px;background:#f4fcfd;"></div>
<svg style="position:absolute;left:20.00px;top:135.00px" width="24.00" height="24.00" viewBox="0 0 24 24"><path d="M7 5 H17 L18.5 13 H5.5 Z" fill="#2f6fd8"/><path d="M8.5 7.8 H12.8 V6 L16 9 L12.8 12 V10.2 H8.5 Z" fill="#fff"/><rect x="5.5" y="14" width="13" height="4" fill="#2f6fd8"/><rect x="12.8" y="15.4" width="1.8" height="1.3" fill="#fff"/><rect x="15.6" y="15.4" width="1.8" height="1.3" fill="#fff"/></svg>
<svg style="position:absolute;left:20.00px;top:165.00px" width="24.00" height="24.00" viewBox="0 0 24 24"><path d="M6 12 A6.8 6.8 0 0 1 12.2 4.3 V12 Z" fill="#2f6fd8"/><path d="M13.3 4 A7.5 7.5 0 0 1 20 11 H13.3 Z" fill="#2f6fd8"/><rect x="7.5" y="13" width="12.5" height="6" fill="#da8c46"/><text x="13.75" y="18" font-size="5.5" font-weight="700" fill="#fff" text-anchor="middle" font-family="Liberation Sans">PRO</text></svg>
<svg style="position:absolute;left:20.00px;top:195.00px" width="24.00" height="24.00" viewBox="0 0 24 24"><path d="M7.5 9 H16.5 L19 13 H5 Z" fill="#2f6fd8"/><circle cx="12" cy="7.8" r="4.8" fill="#fff"/><circle cx="12" cy="7.8" r="4" fill="#2f6fd8"/><rect x="11.2" y="6.8" width="1.8" height="1.8" fill="#bfe6ff"/><rect x="5" y="14" width="14" height="4" fill="#2f6fd8"/><rect x="7" y="15.2" width="1.3" height="1.7" fill="#fff"/><rect x="10" y="15.2" width="1.3" height="1.7" fill="#fff"/><rect x="13.5" y="15.2" width="1.3" height="1.7" fill="#fff"/></svg>
<svg style="position:absolute;left:20.00px;top:225.00px" width="24.00" height="24.00" viewBox="0 0 24 24"><rect x="6" y="5" width="5" height="5" fill="#2f6fd8"/><rect x="6" y="12" width="5" height="5" fill="#2f6fd8"/><rect x="13" y="12" width="5" height="5" fill="#2f6fd8"/><path d="M15.5 4 L19 7.5 L15.5 11 L12 7.5 Z" fill="#2f6fd8"/></svg>
<svg style="position:absolute;left:20.00px;top:294.00px" width="24.00" height="24.00" viewBox="0 0 24 24"><circle cx="12.5" cy="9.4" r="6.5" fill="#2f6fd8"/><path d="M3 9.9 H12.3 L9.8 17.5 H3 Z" fill="#fff"/><path d="M12.3 9.9 L15.8 2.5 M12.3 9.9 L19.8 11.8" stroke="#fff" stroke-width="1.1"/><path d="M4.3 14 L7.2 11 V13 H9.5 V11 L12.4 14 L9.5 17 V15 H7.2 V17 Z" fill="#2f6fd8"/></svg>
<svg style="position:absolute;left:20.00px;top:324.00px" width="24.00" height="24.00" viewBox="0 0 24 24"><path d="M6 3.5 L11 9" stroke="#b8c4d8" stroke-width="1"/><path d="M14.8 4 H20 L12.6 11.5 L10.2 9.2 Z" fill="#2f6fd8"/><path d="M9.3 10 L11.8 12.5 L8 17 H4.2 Z" fill="#2c4a86"/><rect x="8" y="12.3" width="12" height="6.2" fill="#da8c46"/><text x="14" y="17.6" font-size="5.6" font-weight="700" fill="#fff" text-anchor="middle" font-family="Liberation Sans">PRO</text></svg>
<svg style="position:absolute;left:20.00px;top:354.00px" width="24.00" height="24.00" viewBox="0 0 24 24"><circle cx="9.3" cy="8.3" r="4.9" fill="#2f6fd8"/><path d="M5.2 6 L8.8 8.8" stroke="#fff" stroke-width="1"/><circle cx="13.5" cy="12.3" r="6.3" fill="#2f6fd8" stroke="#fff" stroke-width="1.1"/><path d="M13.5 12.3 V6 M13.5 12.3 L19.8 12.8 M13.5 12.3 L11.2 18.6" stroke="#fff" stroke-width="1.1"/></svg>
<svg style="position:absolute;left:20.00px;top:384.00px" width="24.00" height="24.00" viewBox="0 0 24 24"><circle cx="13.5" cy="9.8" r="6.5" fill="#2f6fd8"/><path d="M13.3 9.8 L15.8 2.8 M13.3 9.8 L20.3 11.8" stroke="#fff" stroke-width="1.1"/><circle cx="8" cy="13.8" r="4.6" fill="#fff"/><path d="M8 10.6 V17 M4.8 13.8 H11.2" stroke="#2f6fd8" stroke-width="2.2"/></svg>
<svg style="position:absolute;left:20.00px;top:414.00px" width="24.00" height="24.00" viewBox="0 0 24 24"><rect x="11" y="3" width="3" height="1.8" fill="#2f6fd8"/><rect x="7" y="5" width="11" height="1.8" fill="#2f6fd8"/><path d="M7.2 7.8 H17.8 V15.8 Q17.8 17 16.6 17 H8.4 Q7.2 17 7.2 15.8 Z" fill="#2f6fd8"/><rect x="9.3" y="9.8" width="1.1" height="5" fill="#fff"/><rect x="12" y="9.8" width="1.1" height="5" fill="#fff"/><rect x="14.7" y="9.8" width="1.1" height="5" fill="#fff"/></svg>
<svg style="position:absolute;left:20.00px;top:444.00px" width="24.00" height="24.00" viewBox="0 0 24 24"><circle cx="13" cy="10" r="6.6" fill="#2f6fd8"/><path d="M13 10 L11.8 3 M13 10 L19.8 8" stroke="#fff" stroke-width="1.1"/><circle cx="8.3" cy="13.4" r="4.5" fill="#fff"/><circle cx="8.3" cy="13.4" r="3.2" fill="none" stroke="#2f6fd8" stroke-width="1.3"/><path d="M6.6 15.3 L10 11.5" stroke="#2f6fd8" stroke-width="1.2"/></svg>
<svg style="position:absolute;left:20.00px;top:474.00px" width="24.00" height="24.00" viewBox="0 0 24 24"><path d="M5 10.5 L11 4.5 H18 V11 L11.5 17 Z" fill="#2f6fd8"/><circle cx="14.5" cy="7.6" r="1.5" fill="#c8f0ff"/></svg>
<svg style="position:absolute;left:20.00px;top:504.00px" width="24.00" height="24.00" viewBox="0 0 24 24"><rect x="11" y="2.5" width="2.6" height="7" fill="#2f6fd8"/><path d="M7 10.8 Q12.3 8 17.5 10.8 Z" fill="#2f6fd8"/><path d="M7.5 12 H17 L18.2 17 H5.8 Z" fill="#2f6fd8"/></svg>
<svg style="position:absolute;left:20.00px;top:534.00px" width="24.00" height="24.00" viewBox="0 0 24 24"><circle cx="12" cy="11" r="6.6" fill="#2f6fd8"/><path d="M16.3 4.5 L12.4 10.6 L19.5 12.4" fill="none" stroke="#fff" stroke-width="1.3"/><path d="M17.1 5.6 L14 10.2 L19 11.3 A6.6 6.6 0 0 0 17.1 5.6 Z" fill="#2f6fd8"/></svg>
<svg style="position:absolute;left:20.00px;top:564.00px" width="24.00" height="24.00" viewBox="0 0 24 24"><path d="M5 17.5 L6 13 L14.5 4.5 Q15.3 3.7 16.1 4.5 L18 6.4 Q18.8 7.2 18 8 L9.5 16.5 Z" fill="#2f6fd8"/><path d="M8 12.8 L13.5 7.3 L15.2 9 L9.7 14.5 Z" fill="#c8f0ff"/><path d="M14 4.8 L17.7 8.5 M6 13 L9.5 16.5" stroke="#fff" stroke-width="0.7"/></svg>
<svg style="position:absolute;left:20.00px;top:594.00px" width="24.00" height="24.00" viewBox="0 0 24 24"><path d="M5.5 8.5 Q12 14.5 18.5 8.5" fill="none" stroke="#2f6fd8" stroke-width="2"/><path d="M7 11 L6 13 M12 12.3 V14.5 M17 11 L18 13" stroke="#2f6fd8" stroke-width="1.6"/></svg>
<svg style="position:absolute;left:20.00px;top:624.00px" width="24.00" height="24.00" viewBox="0 0 24 24"><path d="M12 5 H7 V16.5 H17.3 V10.5" fill="none" stroke="#2f6fd8" stroke-width="1.9"/><path d="M8 12 H13" stroke="#2f6fd8" stroke-width="1.5"/><path d="M12.8 9 L17.5 4.5" stroke="#2f6fd8" stroke-width="1.9"/></svg>
<svg style="position:absolute;left:198px;top:231px" width="8" height="10" viewBox="0 0 8 10"><path d="M1.5 1.5 L6.5 5 L1.5 8.5 Z" fill="#8a8a8a"/></svg>
<svg style="position:absolute;left:0;top:0;overflow:visible" width="1" height="1"><path d="M222.0 107 L225.5 103.5 L229.0 107" fill="none" stroke="#505050" stroke-width="2.1"/></svg>
<svg style="position:absolute;left:0;top:0;overflow:visible" width="1" height="1"><path d="M222.0 643 L225.5 646.5 L229.0 643" fill="none" stroke="#505050" stroke-width="2.1"/></svg>
<svg style="position:absolute;left:0;top:0;overflow:visible" width="1" height="1"><path d="M867.0 103 L870.5 99.5 L874.0 103" fill="none" stroke="#505050" stroke-width="2.1"/></svg>
<svg style="position:absolute;left:0;top:0;overflow:visible" width="1" height="1"><path d="M867.0 343.5 L870.5 347.0 L874.0 343.5" fill="none" stroke="#505050" stroke-width="2.1"/></svg>
<svg style="position:absolute;left:0;top:0;overflow:visible" width="1" height="1"><path d="M249.5 359.0 L246.0 362.5 L249.5 366.0" fill="none" stroke="#505050" stroke-width="2.1"/></svg>
<svg style="position:absolute;left:0;top:0;overflow:visible" width="1" height="1"><path d="M852 359.0 L855.5 362.5 L852 366.0" fill="none" stroke="#505050" stroke-width="2.1"/></svg>
<svg style="position:absolute;left:0;top:0;overflow:visible" width="1" height="1"><path d="M867.0 389 L870.5 385.5 L874.0 389" fill="none" stroke="#505050" stroke-width="2.1"/></svg>
<svg style="position:absolute;left:0;top:0;overflow:visible" width="1" height="1"><path d="M867.0 648 L870.5 651.5 L874.0 648" fill="none" stroke="#505050" stroke-width="2.1"/></svg>
<span style="position:absolute;left:370.50px;top:609.69px;font-size:11px;line-height:11px;font-weight:700;color:#111;transform:scaleX(0.9434);transform-origin:0 0;white-space:pre;-webkit-text-stroke:0.3px #111;">G: KINGSTON</span>
<span style="position:absolute;left:370.00px;top:630.69px;font-size:11px;line-height:11px;font-weight:400;color:#1a1a1a;transform:scaleX(0.9200);transform-origin:0 0;white-space:pre;-webkit-text-stroke:0.22px #1a1a1a;">14.99GB NTFS</span>
<div style="position:absolute;left:458px;top:190px;width:214px;height:416px;box-sizing:border-box;border:1px solid #7c7c7c;background:#fff;box-shadow:2px 2px 3px rgba(0,0,0,0.35)"></div>
<div style="position:absolute;left:485px;top:191px;width:1px;height:414px;background:#ebebeb;"></div>
<div style="position:absolute;left:459px;top:432px;width:212px;height:30px;background:#dfe7f1;"></div>
<svg style="position:absolute;left:450px;top:420px" width="230" height="50" viewBox="450 420 230 50"><path d="M459.0 431.3 L460.5 431.3 M458.8 431.5 L458.8 434.5 M466.5 431.3 L472.0 431.3 M465.6 462.3 L471.1 462.3 M478.5 431.3 L484.0 431.3 M477.6 462.3 L483.1 462.3 M490.5 431.3 L496.0 431.3 M489.6 462.3 L495.1 462.3 M502.5 431.3 L508.0 431.3 M501.6 462.3 L507.1 462.3 M514.5 431.3 L520.0 431.3 M513.6 462.3 L519.1 462.3 M526.5 431.3 L532.0 431.3 M525.6 462.3 L531.1 462.3 M538.5 431.3 L544.0 431.3 M537.6 462.3 L543.1 462.3 M550.5 431.3 L556.0 431.3 M549.6 462.3 L555.1 462.3 M562.5 431.3 L568.0 431.3 M561.6 462.3 L567.1 462.3 M574.5 431.3 L580.0 431.3 M573.6 462.3 L579.1 462.3 M586.5 431.3 L592.0 431.3 M585.6 462.3 L591.1 462.3 M598.5 431.3 L604.0 431.3 M597.6 462.3 L603.1 462.3 M610.5 431.3 L616.0 431.3 M609.6 462.3 L615.1 462.3 M622.5 431.3 L628.0 431.3 M621.6 462.3 L627.1 462.3 M634.5 431.3 L640.0 431.3 M633.6 462.3 L639.1 462.3 M646.5 431.3 L652.0 431.3 M645.6 462.3 L651.1 462.3 M658.5 431.3 L664.0 431.3 M657.6 462.3 L663.1 462.3 M458.8 441.8 L458.8 446.8 M458.8 454.3 L458.8 462.1 M459.0 462.3 L460.5 462.3 M670.0 432.5 L670.0 438.2 M670.0 445.0 L670.0 450.3 M670.0 456.5 L670.0 462.1" fill="none" stroke="#e20e0e" stroke-width="3" stroke-linecap="round"/></svg>
<div style="position:absolute;left:496px;top:212px;width:6px;height:1px;background:#111;"></div>
<svg style="position:absolute;left:457.16px;top:196.36px" width="25.68" height="25.68" viewBox="0 0 24 24"><circle cx="12.5" cy="9.4" r="6.5" fill="#2c62c6"/><path d="M3 9.9 H12.3 L9.8 17.5 H3 Z" fill="#fff"/><path d="M12.3 9.9 L15.8 2.5 M12.3 9.9 L19.8 11.8" stroke="#fff" stroke-width="1.1"/><path d="M4.3 14 L7.2 11 V13 H9.5 V11 L12.4 14 L9.5 17 V15 H7.2 V17 Z" fill="#2c62c6"/></svg>
<div style="position:absolute;left:496px;top:242px;width:6px;height:1px;background:#707070;"></div>
<div style="position:absolute;left:496px;top:272px;width:6px;height:1px;background:#707070;"></div>
<div style="position:absolute;left:496px;top:302px;width:6px;height:1px;background:#111;"></div>
<svg style="position:absolute;left:457.16px;top:286.36px" width="25.68" height="25.68" viewBox="0 0 24 24"><path d="M6 3.5 L11 9" stroke="#b8c4d8" stroke-width="1"/><path d="M14.8 4 H20 L12.6 11.5 L10.2 9.2 Z" fill="#2c62c6"/><path d="M9.3 10 L11.8 12.5 L8 17 H4.2 Z" fill="#2c4a86"/><rect x="8" y="12.3" width="12" height="6.2" fill="#da8c46"/><text x="14" y="17.6" font-size="5.6" font-weight="700" fill="#fff" text-anchor="middle" font-family="Liberation Sans">PRO</text></svg>
<div style="position:absolute;left:496px;top:332px;width:5.5px;height:1px;background:#707070;"></div>
<div style="position:absolute;left:496px;top:362px;width:6px;height:1px;background:#111;"></div>
<svg style="position:absolute;left:457.16px;top:346.36px" width="25.68" height="25.68" viewBox="0 0 24 24"><circle cx="9.3" cy="8.3" r="4.9" fill="#2c62c6"/><path d="M5.2 6 L8.8 8.8" stroke="#fff" stroke-width="1"/><circle cx="13.5" cy="12.3" r="6.3" fill="#2c62c6" stroke="#fff" stroke-width="1.1"/><path d="M13.5 12.3 V6 M13.5 12.3 L19.8 12.8 M13.5 12.3 L11.2 18.6" stroke="#fff" stroke-width="1.1"/></svg>
<div style="position:absolute;left:496px;top:392px;width:6px;height:1px;background:#111;"></div>
<svg style="position:absolute;left:457.16px;top:376.36px" width="25.68" height="25.68" viewBox="0 0 24 24"><circle cx="13.5" cy="9.8" r="6.5" fill="#2c62c6"/><path d="M13.3 9.8 L15.8 2.8 M13.3 9.8 L20.3 11.8" stroke="#fff" stroke-width="1.1"/><circle cx="8" cy="13.8" r="4.6" fill="#fff"/><path d="M8 10.6 V17 M4.8 13.8 H11.2" stroke="#2c62c6" stroke-width="2.2"/></svg>
<div style="position:absolute;left:496px;top:422px;width:6px;height:1px;background:#111;"></div>
<svg style="position:absolute;left:457.16px;top:406.36px" width="25.68" height="25.68" viewBox="0 0 24 24"><rect x="11" y="3" width="3" height="1.8" fill="#2c62c6"/><rect x="7" y="5" width="11" height="1.8" fill="#2c62c6"/><path d="M7.2 7.8 H17.8 V15.8 Q17.8 17 16.6 17 H8.4 Q7.2 17 7.2 15.8 Z" fill="#2c62c6"/><rect x="9.3" y="9.8" width="1.1" height="5" fill="#fff"/><rect x="12" y="9.8" width="1.1" height="5" fill="#fff"/><rect x="14.7" y="9.8" width="1.1" height="5" fill="#fff"/></svg>
<div style="position:absolute;left:496px;top:452px;width:6px;height:1px;background:#111;"></div>
<svg style="position:absolute;left:457.16px;top:436.36px" width="25.68" height="25.68" viewBox="0 0 24 24"><circle cx="13" cy="10" r="6.6" fill="#2c62c6"/><path d="M13 10 L11.8 3 M13 10 L19.8 8" stroke="#fff" stroke-width="1.1"/><circle cx="8.3" cy="13.4" r="4.5" fill="#fff"/><circle cx="8.3" cy="13.4" r="3.2" fill="none" stroke="#2c62c6" stroke-width="1.3"/><path d="M6.6 15.3 L10 11.5" stroke="#2c62c6" stroke-width="1.2"/></svg>
<div style="position:absolute;left:496px;top:482px;width:5px;height:1px;background:#111;"></div>
<svg style="position:absolute;left:457.16px;top:466.36px" width="25.68" height="25.68" viewBox="0 0 24 24"><path d="M5 10.5 L11 4.5 H18 V11 L11.5 17 Z" fill="#2c62c6"/><circle cx="14.5" cy="7.6" r="1.5" fill="#c8f0ff"/></svg>
<div style="position:absolute;left:496px;top:512px;width:6px;height:1px;background:#111;"></div>
<svg style="position:absolute;left:457.16px;top:496.36px" width="25.68" height="25.68" viewBox="0 0 24 24"><rect x="11" y="2.5" width="2.6" height="7" fill="#2c62c6"/><path d="M7 10.8 Q12.3 8 17.5 10.8 Z" fill="#2c62c6"/><path d="M7.5 12 H17 L18.2 17 H5.8 Z" fill="#2c62c6"/></svg>
<div style="position:absolute;left:496px;top:542px;width:6px;height:1px;background:#111;"></div>
<svg style="position:absolute;left:457.16px;top:526.36px" width="25.68" height="25.68" viewBox="0 0 24 24"><circle cx="12" cy="11" r="6.6" fill="#2c62c6"/><path d="M16.3 4.5 L12.4 10.6 L19.5 12.4" fill="none" stroke="#fff" stroke-width="1.3"/><path d="M17.1 5.6 L14 10.2 L19 11.3 A6.6 6.6 0 0 0 17.1 5.6 Z" fill="#2c62c6"/></svg>
<div style="position:absolute;left:496px;top:570px;width:6px;height:1px;background:#111;"></div>
<div style="position:absolute;left:496px;top:595px;width:6px;height:1px;background:#111;"></div>
<svg style="position:absolute;left:457.16px;top:579.66px" width="25.68" height="25.68" viewBox="0 0 24 24"><circle cx="12.3" cy="11.3" r="6.2" fill="none" stroke="#2c62c6" stroke-width="2"/><rect x="11.4" y="7.6" width="1.8" height="1.7" fill="#2c62c6"/><rect x="11.4" y="10.1" width="1.8" height="4.9" fill="#2c62c6"/></svg>
<svg style="position:absolute;left:656px;top:558px" width="8" height="10" viewBox="0 0 8 10"><path d="M2 1 L6.5 4.5 L2 8 Z" fill="#111"/></svg>
<svg style="position:absolute;left:615px;top:443px" width="14" height="20" viewBox="0 0 14 20"><path d="M1.5 1.3 V16.5 L5 13.2 L7.6 18.6 L9.7 17.6 L7.2 12.3 H12 Z" fill="#fff" stroke="#111" stroke-width="1" stroke-linejoin="miter"/></svg>
<span style="position:absolute;left:495.80px;top:201.89px;font-size:11px;line-height:11px;font-weight:400;color:#111;transform:scaleX(0.9750);transform-origin:0 0;white-space:pre;-webkit-text-stroke:0.22px #111;">Partitionsgröße ändern</span>
<span style="position:absolute;left:495.80px;top:231.89px;font-size:11px;line-height:11px;font-weight:400;color:#707070;transform:scaleX(0.9750);transform-origin:0 0;white-space:pre;-webkit-text-stroke:0.15px #707070;">Partition verschieben</span>
<span style="position:absolute;left:495.80px;top:261.89px;font-size:11px;line-height:11px;font-weight:400;color:#707070;transform:scaleX(0.9750);transform-origin:0 0;white-space:pre;-webkit-text-stroke:0.15px #707070;">Partitionen zusammenführen</span>
<span style="position:absolute;left:495.80px;top:291.89px;font-size:11px;line-height:11px;font-weight:400;color:#111;transform:scaleX(0.9750);transform-origin:0 0;white-space:pre;-webkit-text-stroke:0.22px #111;">Partition aufteilen</span>
<span style="position:absolute;left:495.80px;top:321.89px;font-size:11px;line-height:11px;font-weight:400;color:#707070;transform:scaleX(0.9750);transform-origin:0 0;white-space:pre;-webkit-text-stroke:0.15px #707070;">Freien Speicherplatz verteilen</span>
<span style="position:absolute;left:495.80px;top:351.89px;font-size:11px;line-height:11px;font-weight:400;color:#111;transform:scaleX(0.9750);transform-origin:0 0;white-space:pre;-webkit-text-stroke:0.22px #111;">Partition kopieren</span>
<span style="position:absolute;left:495.80px;top:381.89px;font-size:11px;line-height:11px;font-weight:400;color:#111;transform:scaleX(0.9750);transform-origin:0 0;white-space:pre;-webkit-text-stroke:0.22px #111;">Partition erstellen</span>
<span style="position:absolute;left:495.80px;top:411.89px;font-size:11px;line-height:11px;font-weight:400;color:#111;transform:scaleX(0.9750);transform-origin:0 0;white-space:pre;-webkit-text-stroke:0.22px #111;">Partition löschen</span>
<span style="position:absolute;left:495.80px;top:441.89px;font-size:11px;line-height:11px;font-weight:400;color:#111;transform:scaleX(0.9750);transform-origin:0 0;white-space:pre;-webkit-text-stroke:0.22px #111;">Partition formatieren</span>
<span style="position:absolute;left:495.80px;top:471.89px;font-size:11px;line-height:11px;font-weight:400;color:#111;transform:scaleX(0.9750);transform-origin:0 0;white-space:pre;-webkit-text-stroke:0.22px #111;">Laufwerksname ändern</span>
<span style="position:absolute;left:495.80px;top:501.89px;font-size:11px;line-height:11px;font-weight:400;color:#111;transform:scaleX(0.9750);transform-origin:0 0;white-space:pre;-webkit-text-stroke:0.22px #111;">Partition bereinigen</span>
<span style="position:absolute;left:495.80px;top:531.89px;font-size:11px;line-height:11px;font-weight:400;color:#111;transform:scaleX(0.9750);transform-origin:0 0;white-space:pre;-webkit-text-stroke:0.22px #111;">Partition sichern</span>
<span style="position:absolute;left:495.80px;top:559.39px;font-size:11px;line-height:11px;font-weight:400;color:#111;transform:scaleX(0.9750);transform-origin:0 0;white-space:pre;-webkit-text-stroke:0.22px #111;">Erweitert</span>
<span style="position:absolute;left:495.80px;top:585.19px;font-size:11px;line-height:11px;font-weight:400;color:#111;transform:scaleX(0.9750);transform-origin:0 0;white-space:pre;-webkit-text-stroke:0.22px #111;">Eigenschaften</span>
</body></html>
